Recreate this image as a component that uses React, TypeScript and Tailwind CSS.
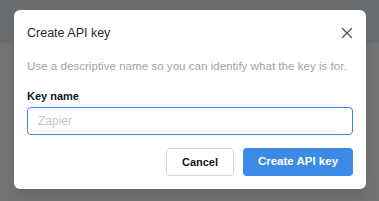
import React from 'react';

const CloseIcon: React.FC = () => (
    <svg width="12" height="12" viewBox="0 0 12 12" fill="none" stroke="#4b5563" strokeWidth="1.4" strokeLinecap="round">
        <path d="M1.5 1.5l9 9M10.5 1.5l-9 9" />
    </svg>
);

const App: React.FC = () => {
    return (
        <div className="relative h-[201px] w-[379px] overflow-hidden bg-[#737373] font-['Liberation_Sans',Arial,sans-serif]">
            <div className="h-[43px] bg-[#686d72]" />

            <div className="absolute left-[14px] top-[10px] w-[352px] rounded-md bg-white px-[13px] pt-[13px] pb-[13px] shadow-lg">
                <div className="flex h-[20px] items-center justify-between">
                    <h2 className="text-[12.5px] text-[#1f2937]">Create API key</h2>
                    <button className="flex h-5 w-[14px] items-center justify-end">
                        <CloseIcon />
                    </button>
                </div>
                <p className="mt-[14px] whitespace-nowrap text-[11.6px] leading-[18px] text-[#9ca3af]">
                    Use a descriptive name so you can identify what the key is for.
                </p>
                <label className="mt-[13px] block text-[11px] font-bold leading-[16px] text-[#111827]">Key name</label>
                <input
                    type="text"
                    placeholder="Zapier"
                    className="mt-[3px] block h-[28px] w-full rounded-[4px] border border-[#3b82f6] px-[10px] text-[12px] text-[#111827] outline-none placeholder:text-[#c2c6cc]"
                />
                <div className="mt-[13px] flex justify-end gap-[9px]">
                    <button className="h-[28px] w-[68px] rounded-[4px] border border-[#d1d5db] bg-white text-[11px] font-bold text-[#111827]">
                        Cancel
                    </button>
                    <button className="h-[28px] w-[110px] rounded-[4px] bg-[#3b8be6] text-[11.5px] font-bold text-white">
                        Create API key
                    </button>
                </div>
            </div>
        </div>
    );
};

export default App;
